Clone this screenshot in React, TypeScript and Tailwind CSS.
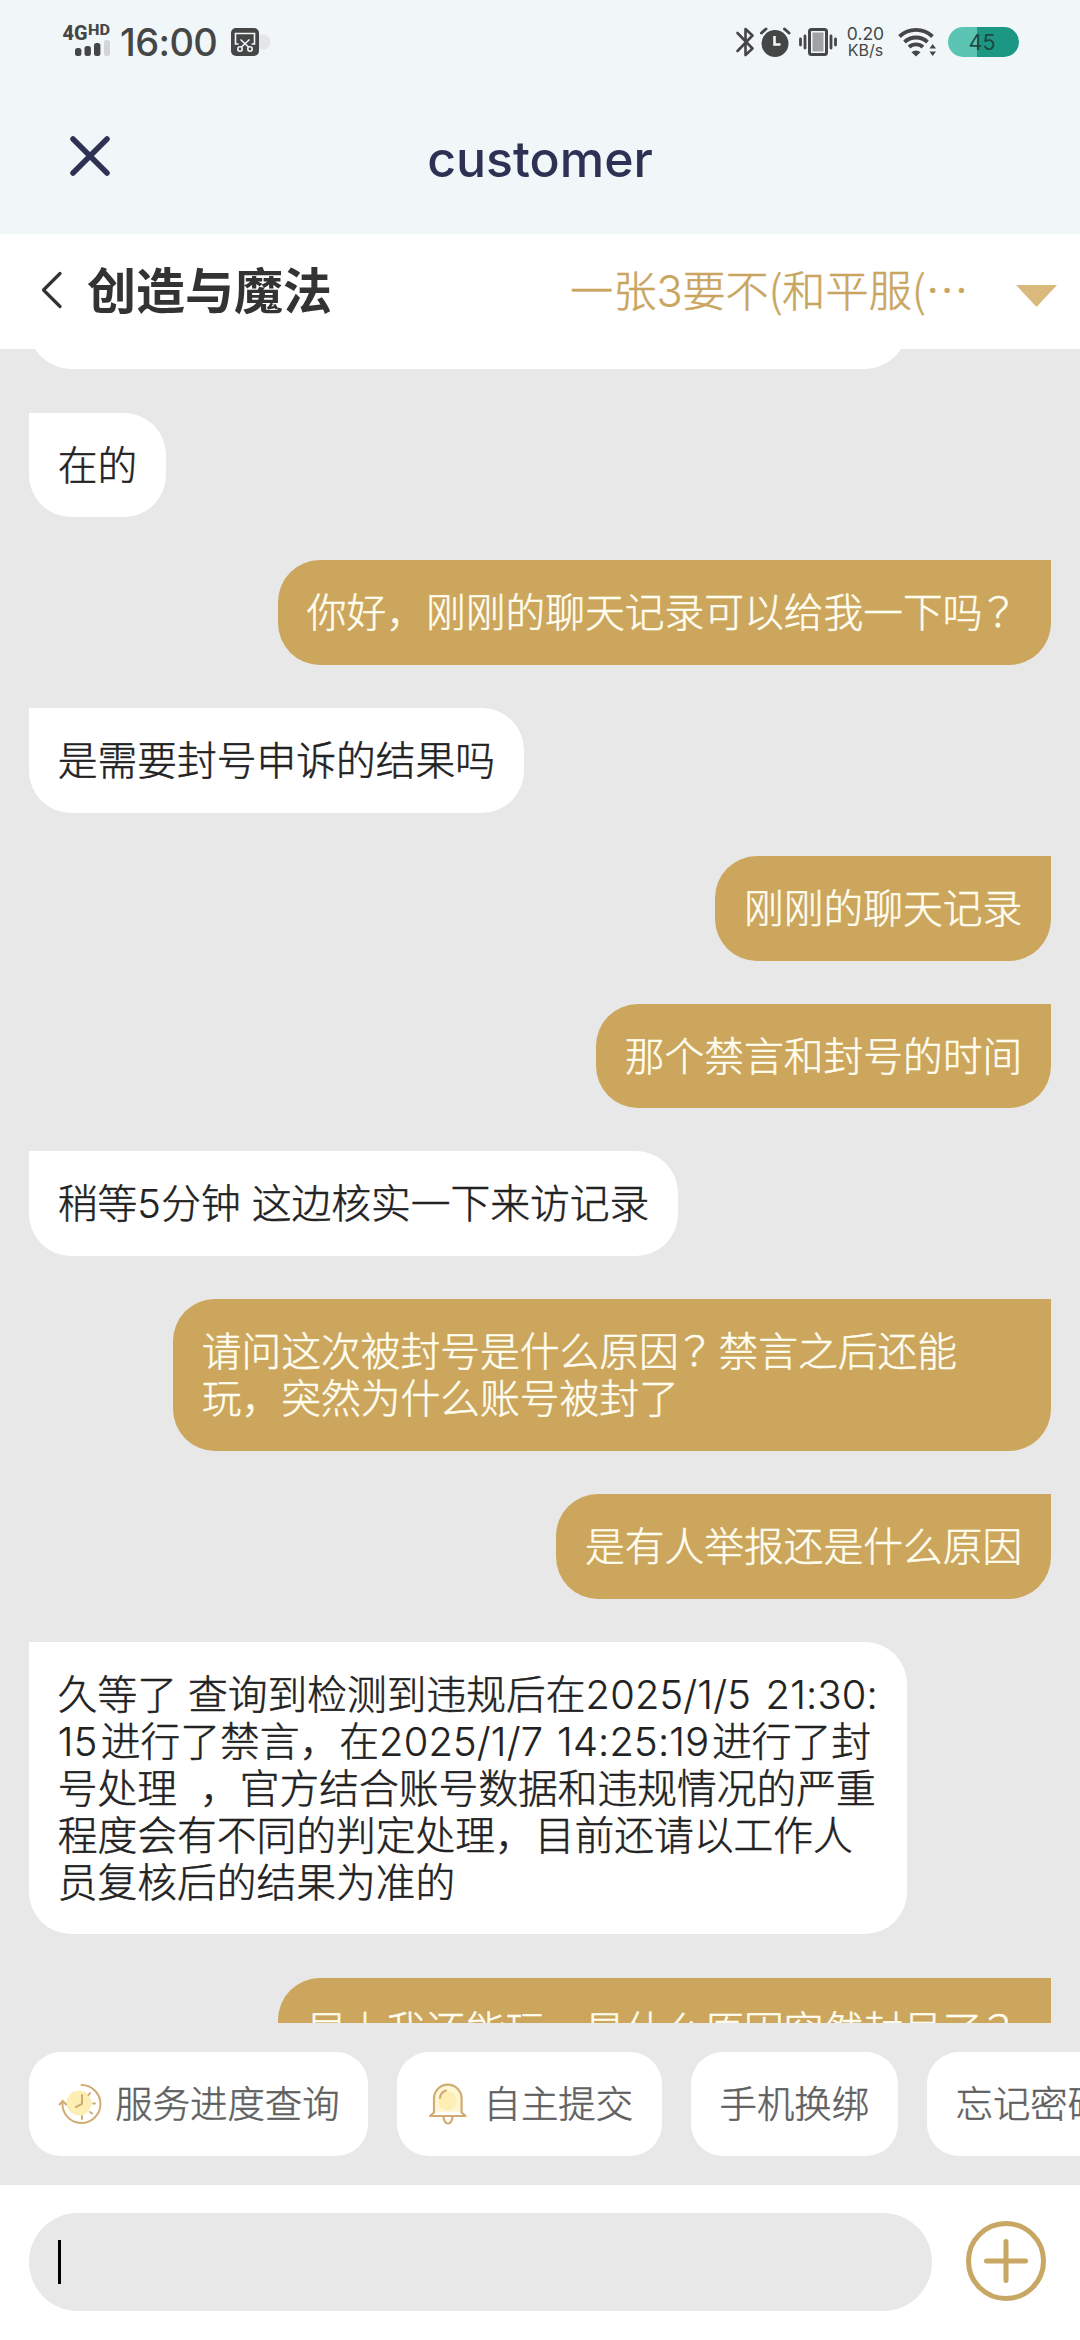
import React from "react";

type Message = { mine: boolean; lines: React.ReactNode[] };

const Num = ({ children, w }: { children: string; w: string }) => (
  <span className={"inline-block whitespace-pre align-baseline font-[Inter] leading-none tracking-[0.2px] [-webkit-text-stroke:0.2px_currentColor] " + w}>
    {children}
  </span>
);

const Ask = () => <span className="-ml-1 mr-1 font-['Noto_Sans_CJK_JP']">？</span>;

const messages: Message[] = [
  { mine: false, lines: ["在的"] },
  { mine: true, lines: [<>你好，刚刚的聊天记录可以给我一下吗<Ask /></>] },
  { mine: false, lines: ["是需要封号申诉的结果吗"] },
  { mine: true, lines: ["刚刚的聊天记录"] },
  { mine: true, lines: ["那个禁言和封号的时间"] },
  {
    mine: false,
    lines: [
      <>
        稍等<Num w="w-[24px]">5</Num>分钟<span className="inline-block w-[11px]"> </span>这边核实一下来访记录
      </>,
    ],
  },
  { mine: true, lines: [<>请问这次被封号是什么原因<Ask />禁言之后还能</>, "玩，突然为什么账号被封了"] },
  { mine: true, lines: ["是有人举报还是什么原因"] },
  {
    mine: false,
    lines: [
      <>
        久等了<span className="inline-block w-[11px]"> </span>查询到检测到违规后在
        <Num w="w-[168px]">2025/1/5</Num>
        <span className="inline-block w-[12px]"> </span>
        <Num w="w-[111px]">21:30:</Num>
      </>,
      <>
        <Num w="w-[43px]">15</Num>进行了禁言，在<Num w="w-[168px]">2025/1/7</Num>
        <span className="inline-block w-[10px]"> </span>
        <Num w="w-[155px]">14:25:19</Num>进行了封
      </>,
      <>
        号处理<span className="inline-block w-[23px]"> </span>，官方结合账号数据和违规情况的严重
      </>,
      "程度会有不同的判定处理，目前还请以工作人",
      "员复核后的结果为准的",
    ],
  },
  { mine: true, lines: [<>早上我还能玩，是什么原因突然封号了<Ask /></>] },
];

function Bubble({ mine, lines }: Message) {
  return (
    <div
      className={
        mine
          ? "shrink-0 self-end rounded-[42px] rounded-tr-none bg-[#cba65c] px-[28.8px] pt-[26px] pb-[31.6px] text-[#fffdf0]"
          : "shrink-0 self-start rounded-[42px] rounded-tl-none bg-white px-[28.8px] pt-[26px] pb-[31.6px] text-[#222222]"
      }
    >
      {lines.map((line, i) => (
        <div
          key={i}
          className={
            lines.length > 1
              ? "h-[47px] w-[820.4px] whitespace-nowrap text-[39.75px] leading-[47px] font-light [-webkit-text-stroke:0.5px_currentColor]"
              : "h-[47px] whitespace-nowrap text-[39.75px] leading-[47px] font-light [-webkit-text-stroke:0.5px_currentColor]"
          }
        >
          {line}
        </div>
      ))}
    </div>
  );
}

function StatusBar() {
  return (
    <div className="flex h-[84px] items-center pl-[62px] pr-[61px] text-[#454747]">
      <svg className="h-[40px] w-[50px] shrink-0" viewBox="62 22 50 40" fill="#454747">
        <text x="62.500" y="40" fontFamily="Roboto" fontWeight="800" fontSize="20.5" textLength="25" lengthAdjust="spacingAndGlyphs">4G</text>
        <text x="88" y="35" fontFamily="Roboto" fontWeight="800" fontSize="14" textLength="22" lengthAdjust="spacingAndGlyphs">HD</text>
        <rect x="75" y="48" width="6.4" height="8" rx="2.5" />
        <rect x="84.500" y="46" width="6.4" height="10" rx="2.500" />
        <rect x="94" y="43" width="6.400" height="13" rx="2.500" />
        <rect x="104" y="40" width="6" height="16" rx="2.500" fill="#d2d6d8" />
      </svg>
      <span className="ml-[8px] w-[103px] font-[Inter] text-[38px] leading-none font-medium tracking-[-0.6px]">16:00</span>
      <svg className="ml-[8px] h-[30px] w-[40px] shrink-0" viewBox="231 27 40 30">
        <circle cx="263" cy="42" r="7.500" fill="#e2e6e8" />
        <rect x="231" y="28" width="28" height="28" rx="5" fill="#454747" />
        <g fill="none" stroke="#f1f6f9" strokeWidth="1.600">
          <path d="M238.500 44h-3V33.500h19V44h-3" />
          <path d="M240.500 39.500l8 7.500M249.500 39.500l-8 7.500" />
          <circle cx="240" cy="49" r="2.200" />
          <circle cx="250" cy="49" r="2.200" />
        </g>
      </svg>
      <svg className="ml-auto h-[34px] w-[103px] shrink-0" viewBox="736 25 103 34">
        <path d="M738.500 33l15 15.500-7 6.500V29l7 6.500L738.500 51" fill="none" stroke="#454747" strokeWidth="2.600" strokeLinejoin="round" strokeLinecap="round" />
        <circle cx="776" cy="43.500" r="13.500" fill="#454747" />
        <path d="M775.500 36v8.500h6" fill="none" stroke="#f1f6f9" strokeWidth="2.600" />
        <path d="M762.500 33l4.500-4M790 33l-4.500-4" stroke="#454747" strokeWidth="3" strokeLinecap="round" />
        <rect x="810.500" y="29.500" width="17" height="25" rx="2" fill="#f1f6f9" stroke="#454747" strokeWidth="3" />
        <rect x="813.500" y="32.500" width="11" height="19" fill="#9fa3a5" />
        <path d="M801.500 39v6M806 36v12M832 36v12M836.500 39v6" stroke="#454747" strokeWidth="2.800" strokeLinecap="round" />
      </svg>
      <div className="ml-[8px] flex w-[39px] flex-col items-center font-[Inter] text-[17.5px] leading-[17px]">
        <span>0.20</span>
        <span className="text-[16px]">KB/s</span>
      </div>
      <svg className="ml-[12px] h-[34px] w-[40px] shrink-0" viewBox="897 25 40 34" fill="none" stroke="#454747" strokeWidth="3.800">
        <path d="M899.500 36.500a24 24 0 0 1 33 0M904.500 42a17 17 0 0 1 23 0M909 47a10.500 10.500 0 0 1 14 0" />
        <path d="M911.500 52.200a6.500 6.500 0 0 1 9 0L916 56.500z" fill="#454747" stroke="none" />
        <path d="M929.500 48.500h6.500L932.700 44zM929.500 51.500h6.500l-3.300 4.500z" fill="#454747" stroke="none" />
      </svg>
      <div className="ml-[11px] flex h-[30px] w-[71px] shrink-0 items-center justify-center rounded-full bg-linear-to-r from-[#5bc4b3] from-41% to-[#1b9783] to-41% pr-[3px] pt-px font-[Inter] text-[21.5px] leading-none text-[#1c4a43]">
        45
      </div>
    </div>
  );
}

const HistoryIcon = () => (
  <svg className="h-[43px] w-[44px]" viewBox="59 2083 44 43" fill="none" stroke="#d0ab72" strokeWidth="2" strokeLinecap="round">
    <circle cx="80" cy="2103" r="12.500" fill="#fdeeb4" stroke="none" />
    <path d="M82.500 2085a19 19 0 1 1-19 18" />
    <path d="M60.500 2104.500l3.200-3.500 3.500 3.500" />
    <path d="M83 2095v9l-6 3M89.500 2095l1.500-2M94 2103.500h2M91 2112l2 1.500M83 2116v3" />
  </svg>
);

const BellIcon = () => (
  <svg className="h-[43px] w-[44px]" viewBox="427 2083 44 43" fill="none" stroke="#d0ab72" strokeWidth="2.200" strokeLinecap="round" strokeLinejoin="round">
    <path d="M436 2112v-14a13 13 0 0 1 26 0v14z" fill="#fff6d6" stroke="none" />
    <circle cx="448.500" cy="2101" r="9.500" fill="#fdeeb4" stroke="none" />
    <path d="M435 2112.500v-14a13.800 13.800 0 0 1 27.600 0v14l4 3.500h-35.600z" />
    <path d="M441 2098q.5-6 6-7.500" />
    <path d="M444.500 2116.500a4.500 7 0 0 0 9 0" />
  </svg>
);

const chips = [
  { label: "服务进度查询", icon: <HistoryIcon /> },
  { label: "自主提交", icon: <BellIcon /> },
  { label: "手机换绑" },
  { label: "忘记密码" },
];

export default function App() {
  return (
    <div className="flex h-[2340px] w-[1080px] flex-col overflow-hidden bg-[#e8e8e8] font-['Noto_Sans_CJK_SC',sans-serif]">
      <div className="h-[234px] shrink-0 bg-[#f1f6f9]">
        <StatusBar />
        <div className="grid h-[144px] grid-cols-[180px_1fr_180px] items-center text-[#2d3154]">
          <svg className="ml-[68px] h-[44px] w-[44px]" viewBox="0 0 44 44" fill="none" stroke="currentColor" strokeWidth="5.500" strokeLinecap="round">
            <path d="M5 5l34 34M39 5L5 39" />
          </svg>
          <h1 className="pt-[5px] text-center font-[Inter] text-[50px] leading-none font-medium">customer</h1>
        </div>
      </div>

      <div className="flex h-[115px] shrink-0 items-center bg-white pb-[3px] pl-[40px] pr-[23px]">
        <svg className="h-[40px] w-[24px]" viewBox="0 0 24 40" fill="none" stroke="#333" strokeWidth="3.200" strokeLinecap="round" strokeLinejoin="round">
          <path d="M20 3.500L3.500 20 20 36.500" />
        </svg>
        <h2 className="ml-[23px] pb-[5px] text-[49px] leading-none font-bold text-[#333]">创造与魔法</h2>
        <div className="ml-auto flex items-center">
          <span className="w-[405px] whitespace-nowrap text-[43.200px] leading-none font-light text-[#c9a55f] [-webkit-text-stroke:0.5px_currentColor]">
            一张<Num w="w-[26px]">3</Num>要不(和平服(<span>⋯</span>
          </span>
          <svg className="ml-[41px] mt-[12px] h-[22px] w-[41px]" viewBox="0 0 41 22" fill="#d9b97c">
            <path d="M0 0h41L20.500 22z" />
          </svg>
        </div>
      </div>

      <main className="flex h-[1674px] shrink-0 flex-col gap-[43.200px] overflow-hidden px-[29px]">
        <div className="h-[20.400px] w-[878px] shrink-0 overflow-hidden">
          <div className="-mt-[84px] h-[104.400px] rounded-[42px] rounded-tl-none bg-white" />
        </div>
        {messages.map((m, i) => (
          <Bubble key={i} {...m} />
        ))}
      </main>

      <div className="flex h-[162px] shrink-0 items-start gap-[28.800px] overflow-hidden pl-[29px] pt-[29px]">
        {chips.map((c) => (
          <button key={c.label} className="flex h-[104px] shrink-0 items-center gap-[13.500px] rounded-[32px] bg-white px-[28.800px] text-[37.400px] font-light whitespace-nowrap text-[#606060] [-webkit-text-stroke:0.5px_currentColor]">
            {c.icon}
            <span className="pb-[3px]">{c.label}</span>
          </button>
        ))}
      </div>

      <div className="flex h-[155px] shrink-0 items-start bg-white pl-[29px] pt-[28px]">
        <div className="flex h-[98px] w-[903px] items-center rounded-full bg-[#e8e8e8] pl-[29px]">
          <div className="h-[44px] w-[3px] bg-black" />
        </div>
        <svg className="ml-[34px] mt-[8px] h-[80px] w-[80px]" viewBox="0 0 80 80" fill="none" stroke="#c8a664" strokeWidth="5" strokeLinecap="round">
          <circle cx="40" cy="40" r="37.500" />
          <path d="M40 20.500v39M20.500 40h39" />
        </svg>
      </div>
    </div>
  );
}
